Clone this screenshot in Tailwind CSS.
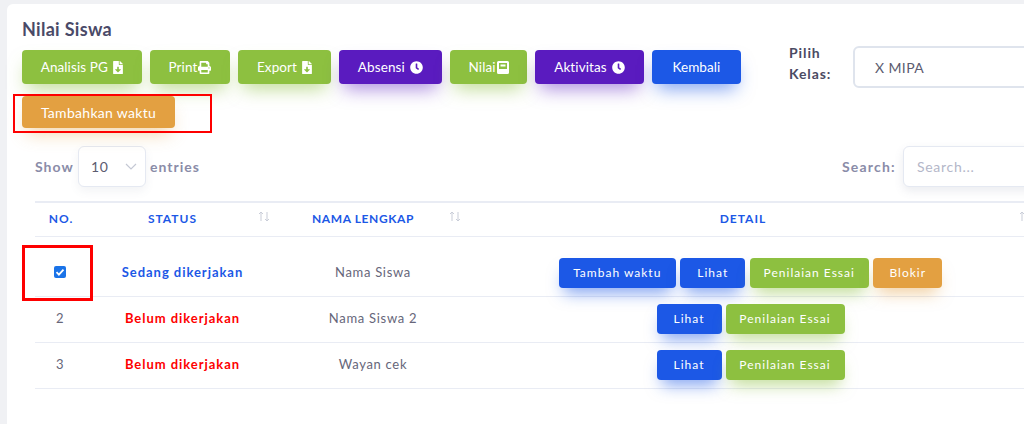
<!DOCTYPE html>
<html lang="en">
<head>
  <meta charset="UTF-8" />
  <title>Nilai Siswa</title>
  <script src="https://cdn.jsdelivr.net/npm/@tailwindcss/browser@4"></script>
</head>
<body class="w-[1024px] h-[424px] overflow-hidden bg-[#f0f1f4] font-['Lato',sans-serif] text-[#4b4b63]">
  <main class="ml-[7px] mt-[4px] w-[1100px] h-[420px] bg-white rounded-tl-md pl-[15px] pt-[16px]">
    <h1 class="h-[18px] text-[18px] leading-[18px] font-bold tracking-[0.3px] text-[#4a4a68]">Nilai Siswa</h1>

    <div class="flex mt-[12px]">
      <div class="flex gap-[8.2px] w-[767px]">
        <button class="flex items-center justify-center gap-[5px] w-[119.6px] h-[34px] rounded-[4px] bg-[#8dc040] text-white text-[13.5px] tracking-[0.1px] shadow-[0_10px_18px_-5px_rgba(141,192,64,0.55)]">Analisis PG
          <svg class="w-[10px] h-[13px]" viewBox="0 0 384 512" fill="currentColor"><path d="M224 136V0H24C10.7 0 0 10.7 0 24v464c0 13.3 10.7 24 24 24h336c13.3 0 24-10.7 24-24V160H248c-13.2 0-24-10.8-24-24zm76.45 211.36l-96.42 95.7c-6.65 6.61-17.39 6.61-24.04 0l-96.42-95.7C73.42 337.29 80.54 320 94.82 320H160v-80c0-8.84 7.16-16 16-16h32c8.84 0 16 7.16 16 16v80h65.18c14.28 0 21.4 17.29 11.27 27.36zM377 105L279.1 7c-4.5-4.5-10.6-7-17-7H256v128h128v-6.1c0-6.3-2.5-12.4-7-16.9z"/></svg>
        </button>
        <button class="flex items-center justify-center gap-[1px] w-[80.3px] h-[34px] rounded-[4px] bg-[#8dc040] text-white text-[13.5px] tracking-[0.1px] shadow-[0_10px_18px_-5px_rgba(141,192,64,0.55)]">Print
          <svg class="w-[13px] h-[13px]" viewBox="0 0 512 512" fill="currentColor"><path d="M448 192V77.25c0-8.49-3.37-16.62-9.37-22.63L393.37 9.37c-6-6-14.14-9.37-22.63-9.37H96C78.33 0 64 14.33 64 32v160c-35.35 0-64 28.65-64 64v112c0 8.84 7.16 16 16 16h48v96c0 17.67 14.33 32 32 32h320c17.67 0 32-14.33 32-32v-96h48c8.84 0 16-7.16 16-16V256c0-35.35-28.65-64-64-64zm-64 256H128v-96h256v96zm0-224H128V64h192v48c0 8.84 7.16 16 16 16h48v96zm48 72c-13.25 0-24-10.75-24-24 0-13.26 10.75-24 24-24s24 10.74 24 24c0 13.25-10.75 24-24 24z"/></svg>
        </button>
        <button class="flex items-center justify-center gap-[5px] w-[92.4px] h-[34px] rounded-[4px] bg-[#8dc040] text-white text-[13.5px] tracking-[0.1px] shadow-[0_10px_18px_-5px_rgba(141,192,64,0.55)]">Export
          <svg class="w-[10px] h-[13px]" viewBox="0 0 384 512" fill="currentColor"><path d="M224 136V0H24C10.7 0 0 10.7 0 24v464c0 13.3 10.7 24 24 24h336c13.3 0 24-10.7 24-24V160H248c-13.2 0-24-10.8-24-24zm76.45 211.36l-96.42 95.7c-6.65 6.61-17.39 6.61-24.04 0l-96.42-95.7C73.42 337.29 80.54 320 94.82 320H160v-80c0-8.84 7.16-16 16-16h32c8.84 0 16 7.16 16 16v80h65.18c14.28 0 21.4 17.29 11.27 27.36zM377 105L279.1 7c-4.5-4.5-10.6-7-17-7H256v128h128v-6.1c0-6.3-2.5-12.4-7-16.9z"/></svg>
        </button>
        <button class="flex items-center justify-center gap-[5px] w-[103px] h-[34px] rounded-[4px] bg-[#5a1bbf] text-white text-[13.5px] tracking-[0.1px] shadow-[0_10px_18px_-5px_rgba(90,27,191,0.5)]">Absensi
          <svg class="w-[13px] h-[13px]" viewBox="0 0 512 512" fill="currentColor"><path d="M256,8C119,8,8,119,8,256S119,504,256,504,504,393,504,256,393,8,256,8Zm92.49,313h0l-20,25a16,16,0,0,1-22.49,2.5h0l-67-49.72a40,40,0,0,1-15-31.23V112a16,16,0,0,1,16-16h32a16,16,0,0,1,16,16V256l58,42.5A16,16,0,0,1,348.49,321Z"/></svg>
        </button>
        <button class="flex items-center justify-center gap-[1px] w-[77px] h-[34px] rounded-[4px] bg-[#8dc040] text-white text-[13.5px] tracking-[0.1px] shadow-[0_10px_18px_-5px_rgba(141,192,64,0.55)]">Nilai
          <svg class="w-[12px] h-[13px]" viewBox="0 0 12 13" fill="currentColor"><path fill-rule="evenodd" d="M1.5 0h9A1.5 1.5 0 0 1 12 1.5v10a1.5 1.5 0 0 1-1.5 1.5h-9A1.5 1.5 0 0 1 0 11.500v-10A1.500 1.500 0 0 1 1.500 0zM2 2v6h8V2zM3.500 3.500h5v2h-5z"/></svg>
        </button>
        <button class="flex items-center justify-center gap-[5px] w-[108.5px] h-[34px] rounded-[4px] bg-[#5a1bbf] text-white text-[13.5px] tracking-[0.1px] shadow-[0_10px_18px_-5px_rgba(90,27,191,0.5)]">Aktivitas
          <svg class="w-[13px] h-[13px]" viewBox="0 0 512 512" fill="currentColor"><path d="M256,8C119,8,8,119,8,256S119,504,256,504,504,393,504,256,393,8,256,8Zm92.49,313h0l-20,25a16,16,0,0,1-22.49,2.5h0l-67-49.72a40,40,0,0,1-15-31.23V112a16,16,0,0,1,16-16h32a16,16,0,0,1,16,16V256l58,42.5A16,16,0,0,1,348.49,321Z"/></svg>
        </button>
        <button class="w-[89px] h-[34px] rounded-[4px] bg-[#1c58e6] text-white text-[13.5px] tracking-[0.1px] shadow-[0_10px_18px_-5px_rgba(28,88,230,0.55)]">Kembali</button>
      </div>
      <div class="flex items-center -mt-[4px] h-[42px]">
        <label class="w-[64px] -mt-[8px] text-[14px] leading-[21px] font-bold tracking-[0.9px]">Pilih Kelas:</label>
        <div class="flex items-center w-[220px] h-[42px] pl-[20px] rounded-[6px] border-2 border-[#dfe4ed] text-[14px] tracking-[0.4px] text-[#5c5c70]">X MIPA</div>
      </div>
    </div>

    <div class="relative mt-[8px] h-[32px]">
      <button class="w-[153px] h-[32px] rounded-[4px] bg-[#e3a041] text-white text-[14px] tracking-[0.3px] shadow-[0_10px_18px_-5px_rgba(227,160,65,0.45)]">Tambahkan waktu</button>
      <div class="absolute -left-[9px] -top-[2px] w-[199px] h-[39px] border-[2px] border-[#fe0000]"></div>
    </div>

    <div class="flex items-center w-[1068px] h-[41px] mt-[18px] ml-[13px] text-[14px] font-bold tracking-[1px] text-[#8a8ca8]">
      <span class="w-[43px]">Show</span>
      <div class="flex items-center justify-between w-[68px] h-[41px] pl-[12px] pr-[8px] rounded-[6px] border border-[#e5e9f2] bg-white font-normal tracking-[0.7px] text-[#5c5c70] shadow-[0_4px_10px_rgba(90,100,130,0.08)]">10
        <svg class="w-[12px] h-[7px]" viewBox="0 0 12 7" fill="none" stroke="#c4c8d4" stroke-width="1.2"><path d="M1 1l5 5 5-5"/></svg>
      </div>
      <span class="ml-[4px]">entries</span>
      <span class="ml-auto w-[61px] tracking-[1.2px]">Search:</span>
      <div class="flex items-center w-[200px] h-[41px] pl-[13px] rounded-[6px] border border-[#e5e9f2] bg-white font-normal tracking-[0.7px] text-[#b4b7c9] shadow-[0_4px_10px_rgba(90,100,130,0.12)]">Search...</div>
    </div>

    <table class="mt-[14px] ml-[13px] w-[1001px] table-fixed border-collapse text-[13px] tracking-[0.7px] text-[#66667a]">
      <colgroup>
        <col class="w-[50px]" />
        <col class="w-[195px]" />
        <col class="w-[186px]" />
        <col class="w-[570px]" />
      </colgroup>
      <thead>
        <tr class="h-[34px] border-t-2 border-b border-[#e9ecf4] text-[12px] font-bold tracking-[1px] text-[#1c58e6]">
          <th class="pl-[2px] font-bold">NO.</th>
          <th class="relative pr-[20px] font-bold">STATUS
            <svg class="absolute right-[10px] top-[8px] w-[12px] h-[11px]" viewBox="0 0 12 11" fill="none" stroke="#c9cdd8" stroke-width="1"><path d="M3 10V1M1 3l2-2 2 2M9 1v9M7 8l2 2 2-2"/></svg>
          </th>
          <th class="relative pr-[20px] font-bold tracking-[0.6px]">NAMA LENGKAP
            <svg class="absolute right-[5px] top-[8px] w-[12px] h-[11px]" viewBox="0 0 12 11" fill="none" stroke="#c9cdd8" stroke-width="1"><path d="M3 10V1M1 3l2-2 2 2M9 1v9M7 8l2 2 2-2"/></svg>
          </th>
          <th class="relative pr-[16px] font-bold">DETAIL
            <svg class="absolute left-[553px] top-[8px] w-[12px] h-[11px]" viewBox="0 0 12 11" fill="none" stroke="#c9cdd8" stroke-width="1"><path d="M3 10V1M1 3l2-2 2 2M9 1v9M7 8l2 2 2-2"/></svg>
          </th>
        </tr>
      </thead>
      <tbody class="text-center">
        <tr class="h-[60px] border-b border-[#e9ecf4]">
          <td class="pt-[10px]">
            <span class="relative inline-flex align-middle">
              <span class="flex items-center justify-center w-[12px] h-[12px] rounded-[2px] bg-[#1a73e8]">
                <svg class="w-[10px] h-[10px]" viewBox="0 0 10 10" fill="none" stroke="white" stroke-width="1.8"><path d="M1.5 5.2l2.4 2.400 4.600-5"/></svg>
              </span>
              <span class="absolute -left-[32px] -top-[21px] w-[71px] h-[56px] border-[3px] border-[#fe0000]"></span>
            </span>
          </td>
          <td class="pt-[13px] font-bold tracking-[0.95px] text-[#1c58e6]">Sedang dikerjakan</td>
          <td class="pt-[13px]">Nama Siswa</td>
          <td class="pt-[13px]">
            <div class="flex justify-center gap-[4.5px] pr-[1px]">
              <button class="w-[117px] h-[30px] rounded-[4px] bg-[#1c58e6] text-white text-[12px] tracking-[1px] shadow-[0_10px_16px_-5px_rgba(28,88,230,0.55)]">Tambah waktu</button>
              <button class="w-[65px] h-[30px] rounded-[4px] bg-[#1c58e6] text-white text-[12px] tracking-[1px] shadow-[0_10px_16px_-5px_rgba(28,88,230,0.55)]">Lihat</button>
              <button class="w-[119px] h-[30px] rounded-[4px] bg-[#8dc040] text-white text-[12px] tracking-[1px] shadow-[0_10px_16px_-5px_rgba(141,192,64,0.55)]">Penilaian Essai</button>
              <button class="w-[69px] h-[30px] rounded-[4px] bg-[#e3a041] text-white text-[12px] tracking-[1px] shadow-[0_10px_16px_-5px_rgba(227,160,65,0.5)]">Blokir</button>
            </div>
          </td>
        </tr>
        <tr class="h-[46px] border-b border-[#e9ecf4]">
          <td>2</td>
          <td class="font-bold tracking-[0.95px] text-[#fe0000]">Belum dikerjakan</td>
          <td>Nama Siswa 2</td>
          <td>
            <div class="flex justify-center gap-[4px] pr-[1px]">
              <button class="w-[65px] h-[30px] rounded-[4px] bg-[#1c58e6] text-white text-[12px] tracking-[1px] shadow-[0_10px_16px_-5px_rgba(28,88,230,0.55)]">Lihat</button>
              <button class="w-[119px] h-[30px] rounded-[4px] bg-[#8dc040] text-white text-[12px] tracking-[1px] shadow-[0_10px_16px_-5px_rgba(141,192,64,0.55)]">Penilaian Essai</button>
            </div>
          </td>
        </tr>
        <tr class="h-[46px] border-b border-[#e9ecf4]">
          <td>3</td>
          <td class="font-bold tracking-[0.95px] text-[#fe0000]">Belum dikerjakan</td>
          <td>Wayan cek</td>
          <td>
            <div class="flex justify-center gap-[4px] pr-[1px]">
              <button class="w-[65px] h-[30px] rounded-[4px] bg-[#1c58e6] text-white text-[12px] tracking-[1px] shadow-[0_10px_16px_-5px_rgba(28,88,230,0.55)]">Lihat</button>
              <button class="w-[119px] h-[30px] rounded-[4px] bg-[#8dc040] text-white text-[12px] tracking-[1px] shadow-[0_10px_16px_-5px_rgba(141,192,64,0.55)]">Penilaian Essai</button>
            </div>
          </td>
        </tr>
      </tbody>
    </table>
  </main>
</body>
</html>
